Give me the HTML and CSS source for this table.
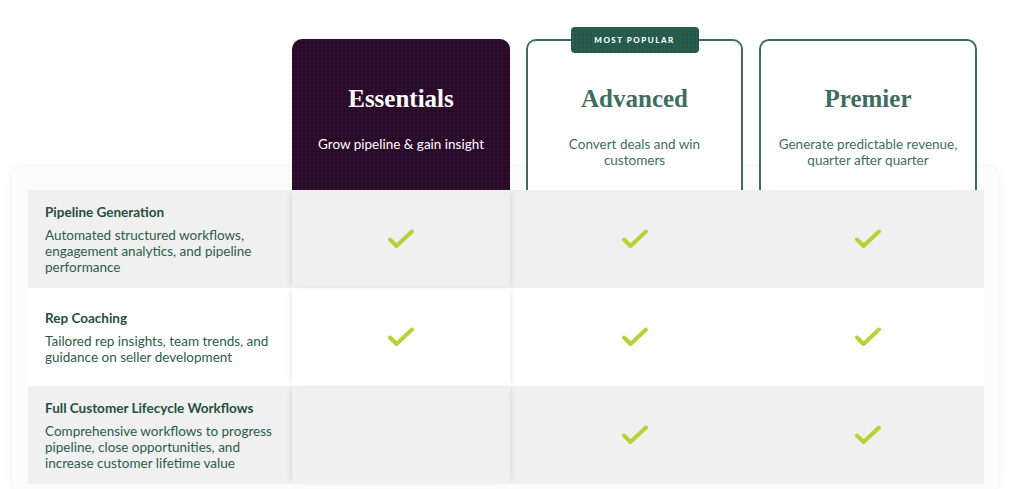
FILE: index.html
```html
<!DOCTYPE html>
<html lang="en">
<head>
<meta charset="utf-8">
<title>Plans</title>
<link rel="stylesheet" href="styles.css">
</head>
<body>
<div class="page">
  <div class="plans">
    <div class="spacer"></div>
    <div class="plan plan-dark">
      <h2>Essentials</h2>
      <p>Grow pipeline &amp; gain insight</p>
    </div>
    <div class="plan plan-outline">
      <span class="badge">MOST POPULAR</span>
      <h2>Advanced</h2>
      <p>Convert deals and win customers</p>
    </div>
    <div class="plan plan-outline">
      <h2>Premier</h2>
      <p>Generate predictable revenue, quarter after quarter</p>
    </div>
  </div>

  <div class="panel">
    <div class="row row-alt">
      <div class="feature">
        <h3>Pipeline Generation</h3>
        <p>Automated structured workflows, engagement analytics, and pipeline performance</p>
      </div>
      <div class="cell cell-ess"><svg class="check" viewBox="0 0 28 22"><path d="M3 11.5 L9.5 18 L25 3.5"/></svg></div>
      <div class="cell"><svg class="check" viewBox="0 0 28 22"><path d="M3 11.5 L9.5 18 L25 3.5"/></svg></div>
      <div class="cell"><svg class="check" viewBox="0 0 28 22"><path d="M3 11.5 L9.5 18 L25 3.5"/></svg></div>
    </div>
    <div class="row">
      <div class="feature">
        <h3>Rep Coaching</h3>
        <p>Tailored rep insights, team trends, and guidance on seller development</p>
      </div>
      <div class="cell cell-ess"><svg class="check" viewBox="0 0 28 22"><path d="M3 11.5 L9.5 18 L25 3.5"/></svg></div>
      <div class="cell"><svg class="check" viewBox="0 0 28 22"><path d="M3 11.5 L9.5 18 L25 3.5"/></svg></div>
      <div class="cell"><svg class="check" viewBox="0 0 28 22"><path d="M3 11.5 L9.5 18 L25 3.5"/></svg></div>
    </div>
    <div class="row row-alt">
      <div class="feature">
        <h3>Full Customer Lifecycle Workflows</h3>
        <p>Comprehensive workflows to progress pipeline, close opportunities, and increase customer lifetime value</p>
      </div>
      <div class="cell cell-ess"></div>
      <div class="cell"><svg class="check" viewBox="0 0 28 22"><path d="M3 11.5 L9.5 18 L25 3.5"/></svg></div>
      <div class="cell"><svg class="check" viewBox="0 0 28 22"><path d="M3 11.5 L9.5 18 L25 3.5"/></svg></div>
    </div>
  </div>
</div>
</body>
</html>
```

FILE: styles.css
```css
html, body {
  margin: 0;
  background: #ffffff;
}

body {
  font-family: Lato, "Noto Sans", sans-serif;
  overflow: hidden;
}

.page {
  padding-top: 39px;
}

.plans {
  display: grid;
  grid-template-columns: 248px 218px 217px 218px;
  column-gap: 16px;
  margin-left: 28px;
  position: relative;
  z-index: 2;
}

.plan {
  position: relative;
  box-sizing: border-box;
  height: 151px;
  border-radius: 10px 10px 0 0;
  text-align: center;
  padding: 46px 12px 0;
}

.plan h2 {
  margin: 0;
  font-family: "Liberation Serif", "DejaVu Serif", serif;
  font-weight: 700;
  font-size: 25px;
  line-height: 28px;
}

.plan p {
  margin: 23px 0 0;
  font-size: 13.5px;
  line-height: 16px;
}

.plan-dark {
  background-color: #2a0a29;
  background-image: radial-gradient(circle, rgba(255, 255, 255, 0.03) 0.7px, transparent 1px);
  background-size: 4px 4px;
  color: #ffffff;
}

.plan-outline {
  background: #ffffff;
  border: 2px solid #3e6d5f;
  border-bottom: none;
  padding-top: 44px;
  color: #3e6d5f;
}

.badge {
  position: absolute;
  top: -14px;
  left: 50%;
  transform: translateX(-50%);
  width: 128px;
  height: 26px;
  border-radius: 4px;
  background-color: #245a4b;
  background-image: radial-gradient(circle, rgba(255, 255, 255, 0.03) 0.7px, transparent 1px);
  background-size: 4px 4px;
  color: #ffffff;
  font-size: 8px;
  font-weight: 900;
  letter-spacing: 1.5px;
  line-height: 26px;
}

.panel {
  position: relative;
  z-index: 1;
  margin: -23px 26px 0 12px;
  padding: 23px 14px 8px 16px;
  background: #fcfcfc;
  border-radius: 10px;
  box-shadow: 0 0 10px rgba(0, 0, 0, 0.07);
}

.row {
  display: grid;
  grid-template-columns: 248px 218px 217px 218px;
  column-gap: 16px;
  height: 98px;
  background: #ffffff;
}

.row-alt {
  background: #f0f0f0;
}

.feature {
  align-self: center;
  padding: 0 0 0 17px;
}

.feature h3 {
  margin: 0 0 6px;
  font-size: 13.5px;
  line-height: 18px;
  font-weight: 700;
  color: #1f4f40;
}

.feature p {
  margin: 0;
  font-size: 13.5px;
  line-height: 16px;
  color: #2c5c4c;
}

.cell {
  display: flex;
  align-items: center;
  justify-content: center;
}

.cell-ess {
  box-shadow: -4px 0 6px -3px rgba(0, 0, 0, 0.1), 4px 0 6px -3px rgba(0, 0, 0, 0.1);
}

.check {
  width: 28px;
  height: 22px;
  fill: none;
  stroke: #b5d236;
  stroke-width: 4;
  stroke-linecap: round;
  stroke-linejoin: round;
}
```
